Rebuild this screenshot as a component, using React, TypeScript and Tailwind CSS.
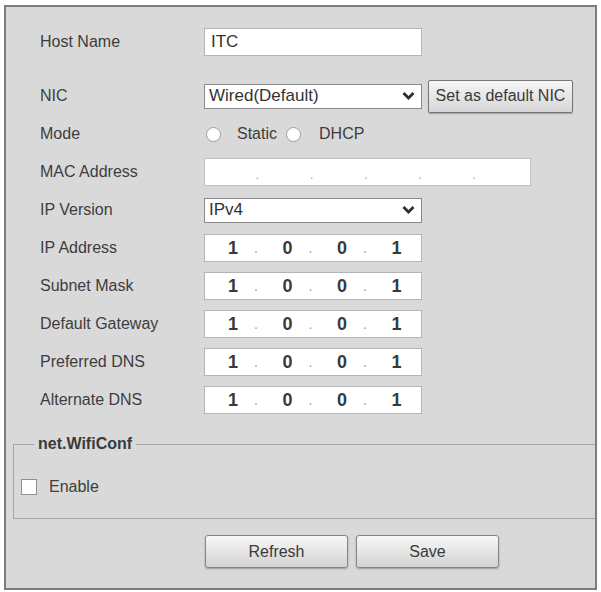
import { ReactNode } from "react";

const font = { fontFamily: '"Liberation Sans", Arial, sans-serif' };

function Row({ label, children, className = "" }: { label: string; children: ReactNode; className?: string }) {
  return (
    <div className={`flex h-[38px] items-center ${className}`}>
      <div className="w-[164px] text-[16px] text-[#3d3d3d]">{label}</div>
      {children}
    </div>
  );
}

function Chevron() {
  return (
    <svg width="13" height="9" viewBox="0 0 13 9" className="absolute right-[6px] top-1/2 -translate-y-1/2">
      <path d="M1.5 1.5 L6.5 6.5 L11.5 1.5" fill="none" stroke="#2e2e2e" strokeWidth="2.8" />
    </svg>
  );
}

function Select({ value }: { value: string }) {
  return (
    <div className="relative flex h-[25px] w-[218px] items-center border border-[#8a8a8a] bg-white pl-[4px] text-[17px] text-[#333]">
      {value}
      <Chevron />
    </div>
  );
}

function IpField({ parts }: { parts: string[] }) {
  return (
    <div className="flex h-[28px] w-[218px] items-center border border-[#b4b4b4] bg-white pl-[7px]">
      {parts.map((p, i) => (
        <div key={i} className="flex items-center">
          <span className="w-[42px] text-center text-[18px] font-bold text-[#3a3a3a]">{p}</span>
          {i < parts.length - 1 && <span className="w-[12.5px] text-[14px] text-[#9a9a9a]">.</span>}
        </div>
      ))}
    </div>
  );
}

function Radio() {
  return <span className="h-[15px] w-[15px] rounded-full border border-[#9c9c9c] bg-white" />;
}

export default function App() {
  const ip = ["1", "0", "0", "1"];
  const ipRows = ["IP Address", "Subnet Mask", "Default Gateway", "Preferred DNS", "Alternate DNS"];

  return (
    <div className="min-h-[592px] bg-white pl-[4px] pt-[5px]" style={font}>
      <div className="flex h-[585px] w-[593px] flex-col border-2 border-[#7c7c7c] bg-[#d9d9d9]">
        <div className="pl-[34px] pt-[16px]">
          <Row label="Host Name" className="mb-[16px]">
            <div className="flex h-[28px] w-[218px] items-center border border-[#b4b4b4] bg-white pl-[6px] text-[17px] text-[#333]">
              ITC
            </div>
          </Row>
          <Row label="NIC">
            <Select value="Wired(Default)" />
            <button className="ml-[6px] h-[33px] w-[145px] rounded-[2px] border border-[#767676] bg-gradient-to-b from-[#f6f6f6] to-[#d6d6d6] text-[16px] text-[#3a3a3a] shadow-[0_1px_1px_rgba(0,0,0,0.25)]">
              Set as default NIC
            </button>
          </Row>
          <Row label="Mode">
            <div className="flex items-center pl-[2px] text-[16px] text-[#3d3d3d]">
              <Radio />
              <span className="ml-[16px]">Static</span>
              <span className="ml-[9px] flex">
                <Radio />
              </span>
              <span className="ml-[18px]">DHCP</span>
            </div>
          </Row>
          <Row label="MAC Address">
            <div className="flex h-[28px] w-[327px] items-center border border-[#c2c2c2] bg-white">
              {[0, 1, 2, 3, 4, 5].map((i) => (
                <div key={i} className="flex flex-1 items-center">
                  <span className="flex-1" />
                  {i < 5 && <span className="translate-y-[3px] text-[12px] text-[#a0a0a0]">.</span>}
                </div>
              ))}
            </div>
          </Row>
          <Row label="IP Version">
            <Select value="IPv4" />
          </Row>
          {ipRows.map((label) => (
            <Row key={label} label={label}>
              <IpField parts={ip} />
            </Row>
          ))}
        </div>

        <fieldset className="ml-[7px] mt-[16px] h-[84px] border border-r-0 border-[#a5a5a5] p-0">
          <legend className="ml-[20px] px-[4px] text-[16px] font-bold leading-[18px] text-[#3a3a3a]">net.WifiConf</legend>
          <div className="mt-[22px] flex items-center pl-[7px]">
            <span className="h-[16px] w-[16px] border border-[#8f8f8f] bg-white" />
            <span className="ml-[12px] text-[16px] text-[#3d3d3d]">Enable</span>
          </div>
        </fieldset>

        <div className="mt-[16px] flex gap-[8px] pl-[199px]">
          {["Refresh", "Save"].map((t) => (
            <button
              key={t}
              className="h-[33px] w-[143px] rounded-[3px] border border-[#858585] bg-gradient-to-b from-[#f8f8f8] to-[#d2d2d2] text-[16px] text-[#3a3a3a] shadow-[0_1px_2px_rgba(0,0,0,0.3)]"
            >
              {t}
            </button>
          ))}
        </div>
      </div>
    </div>
  );
}
